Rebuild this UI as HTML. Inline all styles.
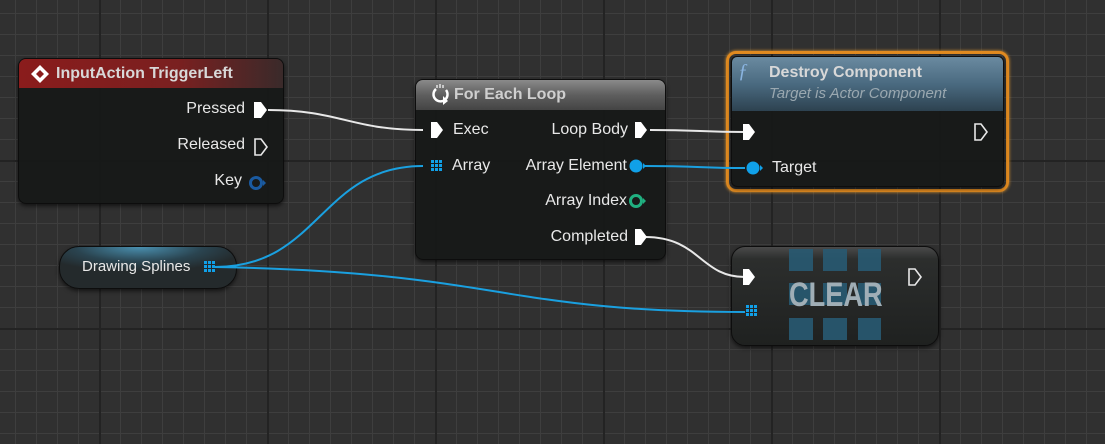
<!DOCTYPE html>
<html><head><meta charset="utf-8"><style>
*{margin:0;padding:0;box-sizing:border-box}
body{width:1105px;height:444px;overflow:hidden;position:relative;font-family:"Liberation Sans",sans-serif;background:#303030}
.node{position:absolute;background:rgba(22,24,23,.94);border:1px solid #0d0d0d;border-radius:8px;box-shadow:0 2px 4px rgba(0,0,0,.6);overflow:hidden}
.hdr{position:absolute;left:0;right:0;top:0;color:#d8d8d8;font-weight:bold;font-size:16px}
.t{position:absolute;color:#e8e8e8;font-size:16px;white-space:nowrap}
svg{position:absolute;left:0;top:0}
.sq{position:absolute;background:#285a72;opacity:.9}
</style></head><body>
<svg width="1105" height="444">
 <defs>
  <pattern id="mn" width="21" height="21" patternUnits="userSpaceOnUse" x="15" y="13">
   <path d="M0.5 0V21M0 0.5H21" stroke="#3e3e3e" stroke-width="1" fill="none"/>
  </pattern>
  <pattern id="mj" width="168" height="168" patternUnits="userSpaceOnUse" x="99" y="160">
   <path d="M1 0V168M0 1H168" stroke="#232323" stroke-width="2" fill="none"/>
  </pattern>
 </defs>
 <rect width="1105" height="444" fill="url(#mn)"/>
 <rect width="1105" height="444" fill="url(#mj)"/>
</svg>

<div class="node" style="left:18px;top:58px;width:266px;height:146px">
 <div class="hdr" style="height:29px;background:linear-gradient(to right,#8a1c1c,#7a2020 60%,#3a2a2a);padding:6px 0 0 37px">InputAction TriggerLeft</div>
</div>
<div class="t" style="right:860px;top:100px">Pressed</div>
<div class="t" style="right:860px;top:136px">Released</div>
<div class="t" style="right:863px;top:172px">Key</div>

<div class="node" style="left:415px;top:79px;width:251px;height:181px">
 <div class="hdr" style="height:30px;background:linear-gradient(to bottom,#8a8a8a,#5e5e5e 50%,#444);padding:6px 0 0 38px;color:#cfcfcf">For Each Loop</div>
</div>
<div class="t" style="left:453px;top:121px">Exec</div>
<div class="t" style="left:452px;top:157px">Array</div>
<div class="t" style="right:477px;top:121px">Loop Body</div>
<div class="t" style="right:478px;top:157px">Array Element</div>
<div class="t" style="right:478px;top:192px">Array Index</div>
<div class="t" style="right:477px;top:228px">Completed</div>

<div style="position:absolute;left:726px;top:51px;width:283px;height:141px;border:3px solid #e08a20;border-radius:10px;box-shadow:0 0 3px #f0a030"></div>
<div class="node" style="left:731px;top:56px;width:273px;height:131px;border-radius:6px">
 <div class="hdr" style="height:54px;background:linear-gradient(to bottom,#6a8aa0,#4a6a80 50%,#2d4250);padding:7px 0 0 37px">Destroy Component
 <div style="font-weight:normal;font-style:italic;color:#9aa8b0;font-size:15px;margin-top:3px">Target is Actor Component</div></div>
</div>
<div class="t" style="left:738px;top:60px;color:#8ab4e0;font-style:italic;font-family:'Liberation Serif',serif;font-size:20px">ƒ</div>
<div class="t" style="left:772px;top:159px">Target</div>

<div class="node" style="left:731px;top:246px;width:208px;height:100px;border-radius:14px;background:linear-gradient(to bottom,#4a4a4a 0,#2c2e2d 12px,#1f2120 100%)"></div>
<div class="sq" style="left:789px;top:249px;width:24px;height:22px"></div>
<div class="sq" style="left:823px;top:249px;width:24px;height:22px"></div>
<div class="sq" style="left:858px;top:249px;width:23px;height:22px"></div>
<div class="sq" style="left:789px;top:283px;width:24px;height:22px"></div>
<div class="sq" style="left:823px;top:283px;width:24px;height:22px"></div>
<div class="sq" style="left:858px;top:283px;width:23px;height:22px"></div>
<div class="sq" style="left:789px;top:318px;width:24px;height:22px"></div>
<div class="sq" style="left:823px;top:318px;width:24px;height:22px"></div>
<div class="sq" style="left:858px;top:318px;width:23px;height:22px"></div>
<div class="t" style="left:789px;top:276px;font-size:34px;font-weight:bold;color:#a0aeb6;transform:scaleX(.8);transform-origin:left">CLEAR</div>

<div style="position:absolute;left:59px;top:246px;width:178px;height:43px;border-radius:20px;border:1px solid #0d0d0d;background:radial-gradient(ellipse 60% 60% at 45% 0%,#4a90b0,#2a4450 60%,#242a2c);box-shadow:0 2px 4px rgba(0,0,0,.6)"></div>
<div class="t" style="left:82px;top:258px;font-size:15px">Drawing Splines</div>

<svg width="1105" height="444">
 <g fill="none" stroke-width="2">
  <path d="M268 110 C340 110 350 130 423 130" stroke="#e8e8e8"/>
  <path d="M215 267 C320 267 320 166 423 166" stroke="#1aa0e0"/>
  <path d="M215 267 C500 272 500 312 745 312" stroke="#1aa0e0"/>
  <path d="M650 130 C700 130 700 132 745 132" stroke="#e8e8e8"/>
  <path d="M645 166 C700 166 700 168 745 168" stroke="#1aa0e0"/>
  <path d="M645 237 C700 237 700 277 745 277" stroke="#e8e8e8"/>
 </g>
 <path d="M40 65 L49 74 L40 83 L31 74Z" fill="#fff"/><path d="M40 70 L44 74 L40 78 L36 74Z" fill="#8a1c1c"/>
 <path d="M436 89 A7 7 0 1 0 446 90" fill="none" stroke="#fff" stroke-width="2.5"/><path d="M443 96 l5 5 l-5 4z" fill="#fff"/>
 <path d="M437 88v-3M440 88v-4M443 88v-3" stroke="#fff" stroke-width="1.2"/>
 <g fill="#fff">
  <path d="M254 102 h7 l6 8 l-6 8 h-7z"/>
  <path d="M431 122 h6 l6 8 l-6 8 h-6z"/>
  <path d="M635 122 h6 l6 8 l-6 8 h-6z"/>
  <path d="M635 229 h6 l6 8 l-6 8 h-6z"/>
  <path d="M743 124 h6 l6 8 l-6 8 h-6z"/>
  <path d="M743 269 h6 l6 8 l-6 8 h-6z"/>
 </g>
 <g fill="none" stroke="#e8e8e8" stroke-width="1.6">
  <path d="M255 139 h6 l6 8 l-6 8 h-6z"/>
  <path d="M975 124 h6 l6 8 l-6 8 h-6z"/>
  <path d="M909 269 h6 l6 8 l-6 8 h-6z"/>
 </g>
 <circle cx="256" cy="183" r="5.5" fill="none" stroke="#1a5aa0" stroke-width="3"/><path d="M263 180 l3 3 l-3 3z" fill="#1a5aa0"/>
 <circle cx="636" cy="166" r="6.5" fill="#10a0e8"/><path d="M643 163 l3 3 l-3 3z" fill="#10a0e8"/>
 <circle cx="753" cy="168" r="6.5" fill="#10a0e8"/><path d="M760 165 l3 3 l-3 3z" fill="#10a0e8"/>
 <circle cx="636" cy="201" r="5.5" fill="none" stroke="#20b080" stroke-width="3"/><path d="M643 198 l3 3 l-3 3z" fill="#20b080"/>
 <g fill="#10a0e8">
  <path d="M431 160h3v3h-3zM435 160h3v3h-3zM439 160h3v3h-3zM431 164h3v3h-3zM435 164h3v3h-3zM439 164h3v3h-3zM431 168h3v3h-3zM435 168h3v3h-3zM439 168h3v3h-3z"/>
  <path d="M204 261h3v3h-3zM208 261h3v3h-3zM212 261h3v3h-3zM204 265h3v3h-3zM208 265h3v3h-3zM212 265h3v3h-3zM204 269h3v3h-3zM208 269h3v3h-3zM212 269h3v3h-3z"/>
  <path d="M746 305h3v3h-3zM750 305h3v3h-3zM754 305h3v3h-3zM746 309h3v3h-3zM750 309h3v3h-3zM754 309h3v3h-3zM746 313h3v3h-3zM750 313h3v3h-3zM754 313h3v3h-3z"/>
 </g>
</svg>
</body></html>
